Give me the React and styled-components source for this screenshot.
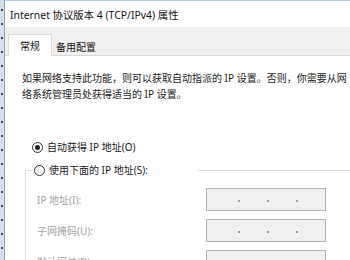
import React from 'react';
import styled, { createGlobalStyle } from 'styled-components';

const GlobalStyle = createGlobalStyle`
  html, body {
    margin: 0;
    padding: 0;
    background: #ffffff;
  }
  body {
    width: 350px;
    height: 260px;
    overflow: hidden;
    font-family: 'Noto Sans', 'Noto Sans CJK SC', sans-serif;
    font-size: 10px;
    color: #1a1a1a;
  }
`;

const Page = styled.div`
  display: flex;
  width: 350px;
  height: 260px;
  overflow: hidden;
`;

const BackWindow = styled.div`
  flex: 0 0 4px;
  background-color: #d3e0ee;
  background-image: repeating-linear-gradient(
    to bottom,
    transparent 0 9px,
    #3b4a60 9px 11px,
    transparent 11px 14px
  );
  background-size: 2px 100%;
  background-repeat: no-repeat;
  background-position: 1px 0;
  border-right: 1px solid #8fa3bb;
`;

const Window = styled.div`
  flex: 1;
  display: flex;
  flex-direction: column;
  min-width: 0;
`;

const TitleBar = styled.div`
  flex-shrink: 0;
  height: 26px;
  display: flex;
  align-items: center;
  padding-left: 5px;
  background: #ffffff;
  border-top: 1px solid #b7cde6;
  font-size: 10.4px;
  color: #111;
  white-space: nowrap;
`;

const TabStrip = styled.div`
  flex-shrink: 0;
  height: 28px;
  display: flex;
  align-items: flex-end;
  padding-left: 3px;
  background: #f0f0f0;
`;

const Tab = styled.div`
  position: relative;
  box-sizing: border-box;
  display: flex;
  align-items: center;
  justify-content: center;
  width: ${({ active }) => (active ? '44px' : '48px')};
  height: ${({ active }) => (active ? '22px' : '17px')};
  margin-bottom: ${({ active }) => (active ? '-1px' : '0')};
  background: ${({ active }) => (active ? '#ffffff' : '#f0f0f0')};
  border: 1px solid ${({ active }) => (active ? '#dadada' : 'transparent')};
  border-bottom: none;
  z-index: ${({ active }) => (active ? 1 : 0)};
  color: #111;
  line-height: 14px;
`;

const Panel = styled.div`
  flex: 1;
  min-height: 0;
  overflow: hidden;
  background: #ffffff;
  border-top: 1px solid #dadada;
  padding: 14px 0 0 17px;
`;

const Intro = styled.p`
  margin: 0;
  line-height: 16px;
  white-space: nowrap;
  color: #1a1a1a;
`;

const RadioRow = styled.label`
  display: flex;
  align-items: center;
  gap: 4px;
  height: 14px;
  line-height: 14px;
  margin: ${({ top }) => top || '0'};
  color: #1a1a1a;
  white-space: nowrap;
`;

const RadioCircle = styled.span`
  box-sizing: border-box;
  width: 11px;
  height: 11px;
  border-radius: 50%;
  border: 1px solid #333;
  background: #fff;
  display: flex;
  align-items: center;
  justify-content: center;

  &::after {
    content: '';
    width: 5px;
    height: 5px;
    border-radius: 50%;
    background: ${({ checked }) => (checked ? '#222' : 'transparent')};
  }
`;

const Group = styled.fieldset`
  margin: 9px 0 0 3px;
  padding: 11px 0 0 11px;
  border: 1px solid #dcdcdc;
  border-right: none;
  border-bottom: none;
  min-width: 0;
`;

const Legend = styled.legend`
  padding: 0 50px 0 2px;
  margin-left: -5px;
`;

const FieldGrid = styled.div`
  display: grid;
  grid-template-columns: 169px 120px;
  row-gap: 8px;
  align-items: center;
`;

const FieldLabel = styled.span`
  color: #a3a3a3;
  line-height: 14px;
  white-space: nowrap;
`;

const AddressBox = styled.div`
  box-sizing: border-box;
  height: 23px;
  display: flex;
  align-items: center;
  padding: 2px 0 0 31px;
  gap: 27px;
  background: #f0f0f0;
  border: 1px solid #b1b1b1;
`;

const Dot = styled.span`
  width: 2px;
  height: 2px;
  background: #9a9a9a;
`;

const fields = ['IP 地址(I):', '子网掩码(U):', '默认网关(D):'];

const App = () => (
  <>
    <GlobalStyle />
    <Page>
      <BackWindow />
      <Window>
        <TitleBar>Internet 协议版本 4 (TCP/IPv4) 属性</TitleBar>
        <TabStrip>
          <Tab active>常规</Tab>
          <Tab>备用配置</Tab>
        </TabStrip>
        <Panel>
          <Intro>
            如果网络支持此功能，则可以获取自动指派的 IP 设置。否则，你需要从网
            <br />
            络系统管理员处获得适当的 IP 设置。
          </Intro>
          <RadioRow top="38px 0 0 10px">
            <RadioCircle checked />
            自动获得 IP 地址(O)
          </RadioRow>
          <Group>
            <Legend>
              <RadioRow>
                <RadioCircle />
                使用下面的 IP 地址(S):
              </RadioRow>
            </Legend>
            <FieldGrid>
              {fields.map(label => (
                <React.Fragment key={label}>
                  <FieldLabel>{label}</FieldLabel>
                  <AddressBox>
                    <Dot />
                    <Dot />
                    <Dot />
                  </AddressBox>
                </React.Fragment>
              ))}
            </FieldGrid>
          </Group>
        </Panel>
      </Window>
    </Page>
  </>
);

export default App;
